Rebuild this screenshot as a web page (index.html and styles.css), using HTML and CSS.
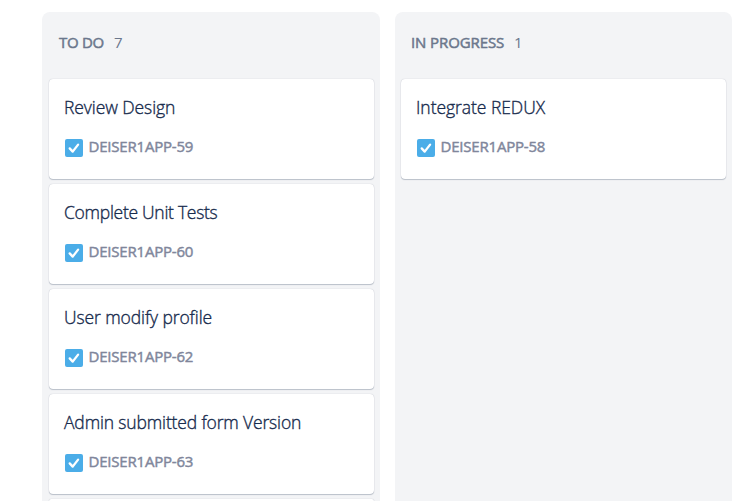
FILE: index.html
```
<!DOCTYPE html>
<html lang="en">
<head>
<meta charset="utf-8">
<title>Board</title>
<link rel="stylesheet" href="styles.css">
</head>
<body>
<svg class="defs" aria-hidden="true">
  <symbol id="task" viewBox="0 0 18 18">
    <rect width="18" height="18" rx="2" fill="#4bade8"/>
    <path d="M4.7 9.4l3 3.2 5.4-7" fill="none" stroke="#fff" stroke-width="2.3" stroke-linecap="round" stroke-linejoin="round"/>
  </symbol>
</svg>
<main class="board">
  <section class="column">
    <h2 class="column-title"><span class="name todo">TO DO</span><span class="count">7</span></h2>
    <article class="card"><p class="summary s1">Review Design</p><div class="issue"><svg class="icon"><use href="#task"/></svg><span class="key">DEISER1APP-59</span></div></article>
    <article class="card"><p class="summary s2">Complete Unit Tests</p><div class="issue"><svg class="icon"><use href="#task"/></svg><span class="key">DEISER1APP-60</span></div></article>
    <article class="card"><p class="summary s3">User modify profile</p><div class="issue"><svg class="icon"><use href="#task"/></svg><span class="key">DEISER1APP-62</span></div></article>
    <article class="card"><p class="summary s4">Admin submitted form Version</p><div class="issue"><svg class="icon"><use href="#task"/></svg><span class="key">DEISER1APP-63</span></div></article>
    <article class="card next"></article>
  </section>
  <section class="column second">
    <h2 class="column-title"><span class="name progress">IN PROGRESS</span><span class="count">1</span></h2>
    <article class="card"><p class="summary s5">Integrate REDUX</p><div class="issue"><svg class="icon"><use href="#task"/></svg><span class="key">DEISER1APP-58</span></div></article>
  </section>
</main>
</body>
</html>
```
FILE: styles.css
```
* { box-sizing: border-box; }
body {
  margin: 0;
  height: 501px;
  overflow: hidden;
  background: #fff;
  font-family: "Open Sans", "Noto Sans", sans-serif;
}
.defs { display: none; }
.board {
  display: flex;
  gap: 15px;
  height: 501px;
  padding: 12px 8px 0 42px;
}
.column {
  display: flex;
  flex-direction: column;
  gap: 5px;
  width: 338px;
  padding: 0 6px 0 7px;
  background: #f3f4f6;
  border-radius: 8px 8px 0 0;
}
.second { width: 337px; padding-left: 6px; }
.column-title {
  display: flex;
  gap: 10px;
  flex: none;
  height: 62px;
  margin: 0;
  padding: 19px 0 0 10px;
  color: #6b778c;
  font-size: 15px;
  line-height: 22px;
  font-weight: 400;
}
.name { white-space: nowrap; -webkit-text-stroke: 0.5px #6b778c; }
.todo { width: 45px; letter-spacing: -0.3px; }
.progress { width: 93px; letter-spacing: -0.1px; }
.count { font-weight: 400; }
.card {
  flex: none;
  height: 100px;
  padding: 15px 15px 0;
  background: #fff;
  border-radius: 4px;
  box-shadow: 0 1px 1px rgba(9, 30, 66, .22), 0 0 1px rgba(9, 30, 66, .28);
}
.next { height: 2px; padding: 0; border-radius: 4px 4px 0 0; }
.summary {
  margin: 0;
  height: 26px;
  color: #172b4d;
  font-size: 17.5px;
  line-height: 26px;
  font-weight: 300;
  -webkit-text-stroke: 0.35px #172b4d;
  white-space: nowrap;
}
.s1 { letter-spacing: -0.08px; }
.s2 { letter-spacing: -0.28px; }
.s3 { letter-spacing: -0.1px; }
.s4 { letter-spacing: -0.15px; }
.s5 { letter-spacing: -0.05px; }
.issue { display: flex; gap: 5.5px; margin-top: 19px; padding-left: 1px; }
.icon { width: 18px; height: 18px; flex: none; }
.key {
  margin-top: -4px;
  color: #80869b;
  font-size: 15px;
  line-height: 22px;
  font-weight: 400;
  -webkit-text-stroke: 0.45px #80869b;
  letter-spacing: -0.2px;
}
```
